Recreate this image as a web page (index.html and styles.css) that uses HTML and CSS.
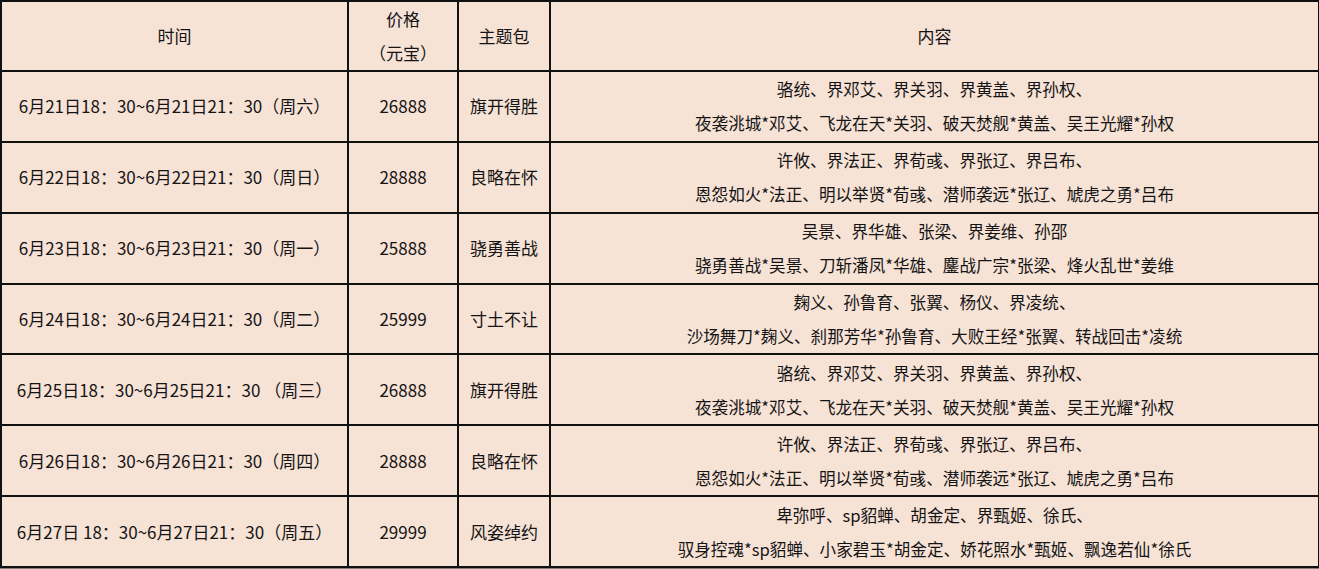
FILE: index.html
```html
<!DOCTYPE html>
<html lang="zh">
<head>
<meta charset="utf-8">
<title>主题包</title>
<link rel="stylesheet" href="styles.css">
</head>
<body>
<table class="sched">
  <colgroup>
    <col class="c-time">
    <col class="c-price">
    <col class="c-theme">
    <col class="c-content">
  </colgroup>
  <thead>
    <tr>
      <th>时间</th>
      <th><div>价格</div><div>（元宝）</div></th>
      <th>主题包</th>
      <th>内容</th>
    </tr>
  </thead>
  <tbody>
    <tr>
      <td>6月21日18：30~6月21日21：30（周六）</td>
      <td>26888</td>
      <td>旗开得胜</td>
      <td><div>骆统、界邓艾、界关羽、界黄盖、界孙权、</div><div>夜袭洮城*邓艾、飞龙在天*关羽、破天焚舰*黄盖、吴王光耀*孙权</div></td>
    </tr>
    <tr>
      <td>6月22日18：30~6月22日21：30（周日）</td>
      <td>28888</td>
      <td>良略在怀</td>
      <td><div>许攸、界法正、界荀彧、界张辽、界吕布、</div><div>恩怨如火*法正、明以举贤*荀彧、潜师袭远*张辽、虓虎之勇*吕布</div></td>
    </tr>
    <tr>
      <td>6月23日18：30~6月23日21：30（周一）</td>
      <td>25888</td>
      <td>骁勇善战</td>
      <td><div>吴景、界华雄、张梁、界姜维、孙邵</div><div>骁勇善战*吴景、刀斩潘凤*华雄、鏖战广宗*张梁、烽火乱世*姜维</div></td>
    </tr>
    <tr>
      <td>6月24日18：30~6月24日21：30（周二）</td>
      <td>25999</td>
      <td>寸土不让</td>
      <td><div>麹义、孙鲁育、张翼、杨仪、界凌统、</div><div>沙场舞刀*麹义、刹那芳华*孙鲁育、大败王经*张翼、转战回击*凌统</div></td>
    </tr>
    <tr>
      <td>6月25日18：30~6月25日21：30 （周三）</td>
      <td>26888</td>
      <td>旗开得胜</td>
      <td><div>骆统、界邓艾、界关羽、界黄盖、界孙权、</div><div>夜袭洮城*邓艾、飞龙在天*关羽、破天焚舰*黄盖、吴王光耀*孙权</div></td>
    </tr>
    <tr>
      <td>6月26日18：30~6月26日21：30（周四）</td>
      <td>28888</td>
      <td>良略在怀</td>
      <td><div>许攸、界法正、界荀彧、界张辽、界吕布、</div><div>恩怨如火*法正、明以举贤*荀彧、潜师袭远*张辽、虓虎之勇*吕布</div></td>
    </tr>
    <tr>
      <td>6月27日 18：30~6月27日21：30（周五）</td>
      <td>29999</td>
      <td>风姿绰约</td>
      <td><div>卑弥呼、sp貂蝉、胡金定、界甄姬、徐氏、</div><div>驭身控魂*sp貂蝉、小家碧玉*胡金定、娇花照水*甄姬、飘逸若仙*徐氏</div></td>
    </tr>
  </tbody>
</table>
</body>
</html>
```

FILE: styles.css
```css
html, body {
  margin: 0;
  padding: 0;
}
body {
  background: #7d7d7d;
  width: 1319px;
  height: 569px;
  overflow: hidden;
  font-family: "Noto Sans CJK SC", "Noto Sans", sans-serif;
  font-size: 17px;
  color: #141414;
}
.sched {
  border-collapse: collapse;
  table-layout: fixed;
  width: 1318px;
  height: 568px;
  background: #f7e2d6;
  margin: 0;
}
.c-time { width: 347px; }
.c-price { width: 110px; }
.c-theme { width: 92px; }
.c-content { width: 769px; }
.sched th,
.sched td {
  border: 2px solid #111;
  text-align: center;
  vertical-align: middle;
  padding: 0;
  font-weight: normal;
  height: 60px;
  line-height: 34px;
  white-space: nowrap;
}
.sched td:last-child div {
  font-size: 16.6px;
}
```
